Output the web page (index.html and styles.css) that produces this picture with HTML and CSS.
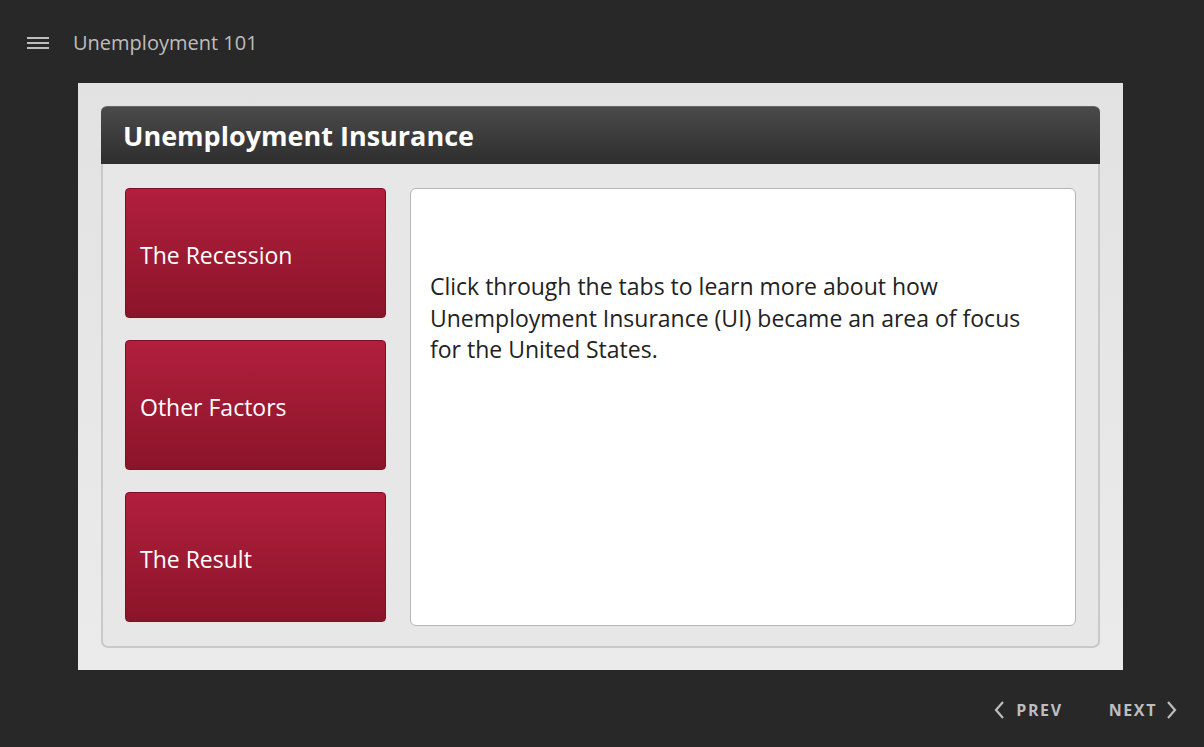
FILE: index.html
```html
<!DOCTYPE html>
<html>
<head>
<meta charset="utf-8">
<link rel="stylesheet" href="styles.css">
</head>
<body>
<div class="app">
  <header class="topbar">
    <div class="burger"><span></span><span></span><span></span></div>
    <div class="course-title">Unemployment 101</div>
  </header>
  <main class="slide">
    <section class="panel">
      <div class="panel-head">Unemployment Insurance</div>
      <div class="panel-body">
        <div class="tabs">
          <div class="tab">The Recession</div>
          <div class="tab">Other Factors</div>
          <div class="tab">The Result</div>
        </div>
        <div class="content">
          <p>Click through the tabs to learn more about how Unemployment Insurance (UI) became an area of focus for the United States.</p>
        </div>
      </div>
    </section>
  </main>
  <footer class="nav">
    <div class="nav-btn prev">
      <svg width="12" height="20" viewBox="0 0 12 20"><path d="M10 2 L3 10 L10 18" fill="none" stroke="#bdbdbd" stroke-width="2.2"/></svg>
      <span>PREV</span>
    </div>
    <div class="nav-btn next">
      <span>NEXT</span>
      <svg width="12" height="20" viewBox="0 0 12 20"><path d="M2 2 L9 10 L2 18" fill="none" stroke="#bdbdbd" stroke-width="2.2"/></svg>
    </div>
  </footer>
</div>
</body>
</html>
```
FILE: styles.css
```css
html, body {
  margin: 0;
  padding: 0;
  background: #282828;
  font-family: "Open Sans", "DejaVu Sans", sans-serif;
}
.app {
  width: 1204px;
  height: 747px;
  display: flex;
  flex-direction: column;
}
.topbar {
  height: 83px;
  display: flex;
  align-items: center;
  padding-left: 27px;
  box-sizing: border-box;
}
.burger {
  width: 22px;
  display: flex;
  flex-direction: column;
  gap: 3px;
  margin-right: 24px;
  margin-top: 2px;
}
.burger span {
  display: block;
  height: 2px;
  background: #bdbdbd;
}
.course-title {
  color: #bdbdbd;
  font-size: 20px;
  margin-top: 1px;
}
.slide {
  margin-left: 78px;
  width: 1045px;
  height: 587px;
  background: linear-gradient(#e2e2e2, #ebebeb);
  padding: 23px 23px 22px 23px;
  box-sizing: border-box;
}
.panel {
  height: 100%;
  display: flex;
  flex-direction: column;
  border-radius: 6px;
}
.panel-head {
  height: 58px;
  background: linear-gradient(#4a4a4a, #2e2e2e);
  border-radius: 6px 6px 0 0;
  color: #fff;
  font-weight: 700;
  font-size: 27px;
  display: flex;
  align-items: center;
  padding-left: 22px;
  box-sizing: border-box;
  border-top: 1px solid #666;
}
.panel-body {
  flex: 1;
  border: 2px solid #c9c9c9;
  border-top: none;
  border-radius: 0 0 7px 7px;
  background: #e7e7e7;
  display: flex;
  padding: 24px 22px 20px 22px;
  gap: 24px;
}
.tabs {
  width: 261px;
  display: flex;
  flex-direction: column;
  gap: 22px;
}
.tab {
  height: 130px;
  box-sizing: border-box;
  border: 1px solid #7d1024;
  border-radius: 4px;
  background: linear-gradient(#b11f3d, #8b1429);
  color: #fff;
  font-size: 23px;
  display: flex;
  align-items: center;
  padding-left: 14px;
  padding-top: 3px;
}
.content {
  flex: 1;
  background: #fff;
  border: 1px solid #b5b5b5;
  border-radius: 6px;
  padding: 82px 30px 0 19px;
  box-sizing: border-box;
}
.content p {
  margin: 0;
  font-size: 23px;
  line-height: 31.5px;
  color: #222;
}
.nav {
  flex: 1;
  display: flex;
  justify-content: flex-end;
  align-items: center;
  padding-right: 26px;
  gap: 46px;
}
.nav-btn {
  display: flex;
  align-items: center;
  gap: 11px;
  color: #bdbdbd;
  font-weight: 700;
  font-size: 16px;
  letter-spacing: 1.6px;
  margin-top: 2px;
}
.nav-btn.next { gap: 9px; }
```
